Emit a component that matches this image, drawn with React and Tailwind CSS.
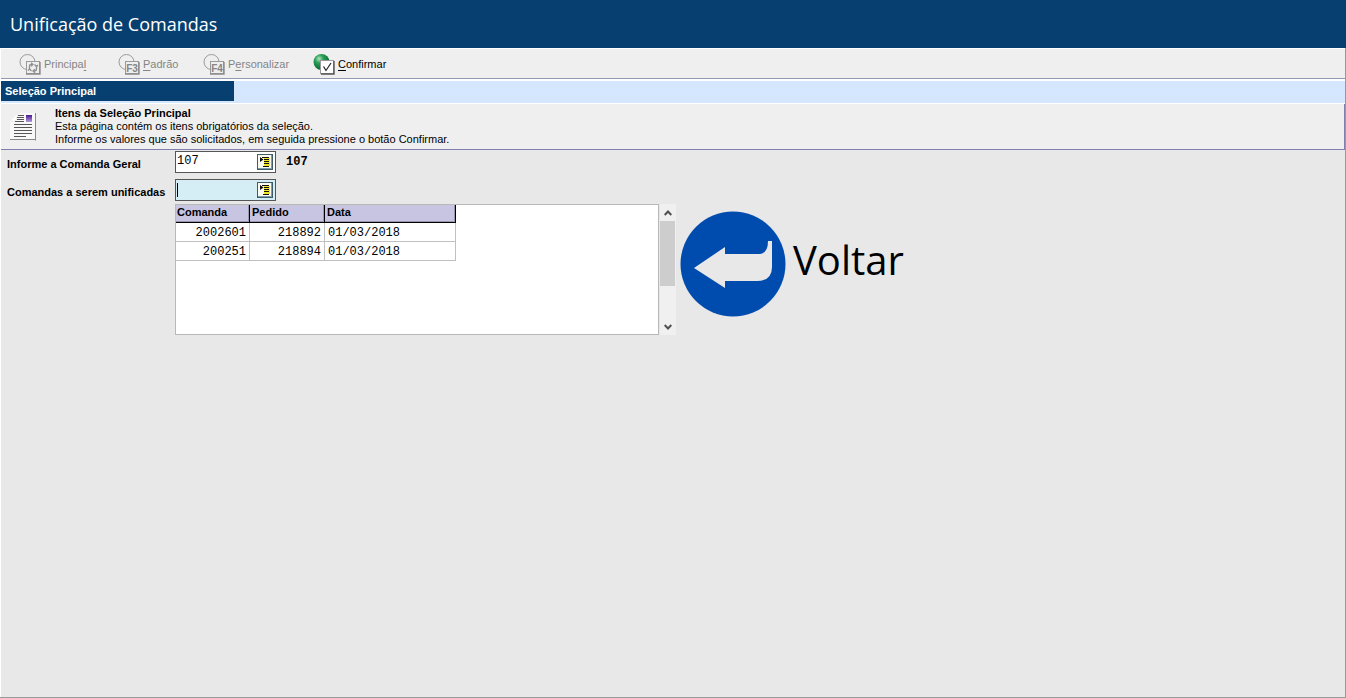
const toolbar = [
  { before: 'Principa', key: 'l', after: '', mark: 'cycle', width: 'w-[99px]', disabled: true },
  { before: '', key: 'P', after: 'adrão', mark: 'F3', width: 'w-[85px]', disabled: true },
  { before: 'P', key: 'e', after: 'rsonalizar', mark: 'F4', width: 'w-[110px]', disabled: true },
  { before: '', key: 'C', after: 'onfirmar', mark: 'check', width: 'w-[80px]', disabled: false },
];

const orders = [
  { comanda: '2002601', pedido: '218892', data: '01/03/2018' },
  { comanda: '200251', pedido: '218894', data: '01/03/2018' },
];

const ToolIcon = ({ mark }) => {
  const active = mark === 'check';
  return (
    <svg className="h-[22px] w-[22px] shrink-0" viewBox="0 0 22 22" aria-hidden="true">
      {active ? (
        <>
          <defs>
            <radialGradient id="ball" cx="0.35" cy="0.3" r="0.75">
              <stop offset="0" stopColor="#b4e4c4" />
              <stop offset="0.35" stopColor="#2a9f55" />
              <stop offset="1" stopColor="#04602c" />
            </radialGradient>
          </defs>
          <circle cx="8.5" cy="8" r="8" fill="url(#ball)" />
          <rect x="7.5" y="6.5" width="13" height="13" fill="#fff" stroke="#999" />
          <path d="M8 20H21V7" fill="none" stroke="#555" strokeWidth="1.4" />
          <path d="M10.5 12.5l2.5 4 5-7.500" fill="none" stroke="#222" strokeWidth="1.2" />
        </>
      ) : (
        <>
          <circle cx="8.5" cy="8" r="7.5" fill="none" stroke="#9a9a9a" />
          <rect x="7.5" y="7.500" width="13" height="12" fill="#efefef" stroke="#9a9a9a" />
          <path d="M7 20H21V8" fill="none" stroke="#8c8c8c" strokeWidth="1.4" />
        </>
      )}
      {mark === 'cycle' && (
        <g fill="none" stroke="#8f8f8f" strokeWidth="1.3">
          <path d="M10.500 15V12Q10.500 10.500 13 10.500M17.500 12V15Q17.500 17 15 17" />
          <path d="M12 8.700l2 1.800-2 1.800M16 15.200l-2 1.800 2 1.800" />
          <path d="M15.500 10.500l2 2 1.500-1.500M12.500 17l-2-2-1.500 1.500" />
        </g>
      )}
      {(mark === 'F3' || mark === 'F4') && (
        <text x="14" y="18" textAnchor="middle" className="fill-[#858585] font-['Liberation_Sans',sans-serif] text-[10px] font-bold">
          {mark}
        </text>
      )}
    </svg>
  );
};

const PageIcon = () => (
  <svg className="h-[29px] w-[28px] shrink-0" viewBox="0 0 28 29" aria-hidden="true">
    <defs>
      <linearGradient id="photo" x1="0" y1="0" x2="0" y2="1">
        <stop offset="0" stopColor="#4a1a8c" />
        <stop offset="1" stopColor="#b39bdc" />
      </linearGradient>
    </defs>
    <path d="M1 8L8 1H27V28H1z" fill="#f8f8f8" />
    <path d="M26.500 1V28.500M1 27.500H27" stroke="#8a8a8a" fill="none" />
    <path d="M1 9H7L9 1z" fill="#fff" stroke="#ddd" strokeWidth="0.5" />
    <path d="M9 3.500h6M8 5.500h7M8 7.500h7M6 9.500h9M5 12.500h18M5 15.500h18M5 18.500h18M5 21.500h18M5 24.500h12" stroke="#555" fill="none" />
    <rect x="17" y="3" width="6" height="7" fill="url(#photo)" />
  </svg>
);

const LookupButton = ({ label }) => (
  <button type="button" aria-label={label} className="h-4 w-4 shrink-0 border border-[#3f5c6a] bg-[#fafaf0]">
    <svg className="h-3.5 w-3.5" viewBox="0 0 14 14" aria-hidden="true">
      <path d="M13.500 0V14M0 13.500H14" stroke="#7f9cab" fill="none" />
      <rect x="6" y="3" width="6" height="8" fill="#efe62a" />
      <path d="M4 2.500h7M6 4.500h5M6 6.500h5M6 8.500h5M5 11.500h6" stroke="#111" fill="none" />
      <path d="M2 2l3.500 2.500L2 7z" fill="#111" />
    </svg>
  </button>
);

const Field = ({ id, label, value, className, active, children }) => (
  <div className="flex items-center">
    <label htmlFor={id} className="w-[174px] shrink-0 pt-1 pl-1.5 text-[11px] font-bold whitespace-nowrap">
      {label}
    </label>
    <div className={`flex h-[22px] w-[101px] items-center border border-[#555] pr-0.5 pl-px ${className}`}>
      {active && <span className="-mr-px h-3.5 w-px shrink-0 bg-black" />}
      <input
        id={id}
        type="text"
        defaultValue={value}
        className="h-4 w-full min-w-0 bg-transparent pb-0.5 font-['Liberation_Mono',monospace] text-[12px] outline-none"
      />
      <LookupButton label={`Pesquisar ${label}`} />
    </div>
    {children}
  </div>
);

const ScrollBar = () => (
  <div className="ml-px flex w-4 flex-col bg-[#f0f0f0]">
    <button type="button" aria-label="Rolar para cima" className="flex h-[17px] items-center justify-center">
      <svg className="h-2 w-2" viewBox="0 0 8 8" aria-hidden="true">
        <path d="M0.700 6L4 2.500 7.300 6" fill="none" stroke="#505050" strokeWidth="2" />
      </svg>
    </button>
    <div className="h-[65px] w-[15px] bg-[#cdcdcd]" />
    <button type="button" aria-label="Rolar para baixo" className="mt-auto flex h-[17px] items-center justify-center">
      <svg className="h-2 w-2" viewBox="0 0 8 8" aria-hidden="true">
        <path d="M0.700 2L4 5.500 7.300 2" fill="none" stroke="#505050" strokeWidth="2" />
      </svg>
    </button>
  </div>
);

const headCell = 'border-r border-b border-black p-0 pb-0.5 leading-[15px] shadow-[inset_-1px_-1px_0_#9a98b0]';
const bodyCell = 'border-r border-b border-[#c0c0c0] p-0 pt-px leading-4';

const OrdersTable = () => (
  <table className="w-[280px] table-fixed border-separate border-spacing-0 text-[11px]">
    <thead>
      <tr className="h-[18px] bg-[#c8c5e3] text-left">
        <th className={`w-[74px] pl-px ${headCell}`}>Comanda</th>
        <th className={`w-[75px] pl-0.5 ${headCell}`}>Pedido</th>
        <th className={`pl-0.5 ${headCell}`}>Data</th>
      </tr>
    </thead>
    <tbody className="font-['Liberation_Mono',monospace] text-[12px]">
      {orders.map((order) => (
        <tr key={order.comanda} className="h-[19px]">
          <td className={`text-right ${bodyCell} pr-[3px]`}>{order.comanda}</td>
          <td className={`text-right ${bodyCell} pr-[3px]`}>{order.pedido}</td>
          <td className={`${bodyCell} pl-[3px]`}>{order.data}</td>
        </tr>
      ))}
    </tbody>
  </table>
);

const BackButton = () => (
  <button type="button" className="ml-1 flex items-center gap-[7px] self-start pt-[7px]">
    <svg className="h-[106px] w-[106px]" viewBox="0 0 106 106" aria-hidden="true">
      <circle cx="53" cy="53" r="52.500" fill="#004cae" />
      <path d="M14 57L45 36V43H80Q88 42 88 30H92V56Q92 70 77 70H45V77z" fill="#e8e8e8" />
    </svg>
    <span className="pb-2 font-['Open_Sans',sans-serif] text-[40px] leading-none font-medium">Voltar</span>
  </button>
);

export default function App() {
  return (
    <div className="flex min-h-screen flex-col border-b border-[#999] bg-[#e8e8e8] font-['Liberation_Sans',Arial,sans-serif] text-[11px] text-black">
      <header className="flex h-12 items-center bg-[#074070] pl-2.5">
        <h1 className="font-['Open_Sans',sans-serif] text-[18px] text-white">Unificação de Comandas</h1>
      </header>

      <main className="flex-1 border-r border-r-[#999] border-l border-l-white">
        <nav className="flex h-[31px] items-center border-t border-b border-t-white border-b-[#8f9ab0] bg-[#efefef] pt-0.5 pl-[18px]">
          {toolbar.map((item) => (
            <button
              key={item.mark}
              type="button"
              disabled={item.disabled}
              className={`flex items-center gap-[3px] ${item.width} ${item.disabled ? 'text-[#858585]' : 'text-black'}`}
            >
              <ToolIcon mark={item.mark} />
              <span>
                {item.before}
                <span className="underline underline-offset-2">{item.key}</span>
                {item.after}
              </span>
            </button>
          ))}
        </nav>

        <div className="h-[25px] border-t-2 border-b border-white bg-[#d5e6ff]">
          <h2 className="h-5 w-[233px] bg-[#074070] pl-1 leading-5 font-bold text-white">Seleção Principal</h2>
        </div>

        <section className="flex h-[46px] border-r border-b border-[#8080b0] bg-[#efefef] pl-2">
          <div className="w-[46px] pt-2">
            <PageIcon />
          </div>
          <div className="pt-0.5 leading-[13px]">
            <h3 className="leading-[14px] font-bold">Itens da Seleção Principal</h3>
            <p>Esta página contém os itens obrigatórios da seleção.</p>
            <p>Informe os valores que são solicitados, em seguida pressione o botão Confirmar.</p>
          </div>
        </section>

        <form className="pt-px" onSubmit={(e) => e.preventDefault()}>
          <Field id="geral" label="Informe a Comanda Geral" value="107" className="bg-white">
            <output htmlFor="geral" className="pl-2.5 font-['Liberation_Mono',monospace] text-[12px] font-bold">
              107
            </output>
          </Field>
          <div className="pt-1.5 pb-[3px]">
            <Field id="unificar" label="Comandas a serem unificadas" value="" className="bg-[#d5eef5]" active />
          </div>
          <div className="flex pl-[174px]">
            <div className="h-[131px] w-[484px] border border-[#b8b8b8] bg-white">
              <OrdersTable />
            </div>
            <ScrollBar />
            <BackButton />
          </div>
        </form>
      </main>
    </div>
  );
}
